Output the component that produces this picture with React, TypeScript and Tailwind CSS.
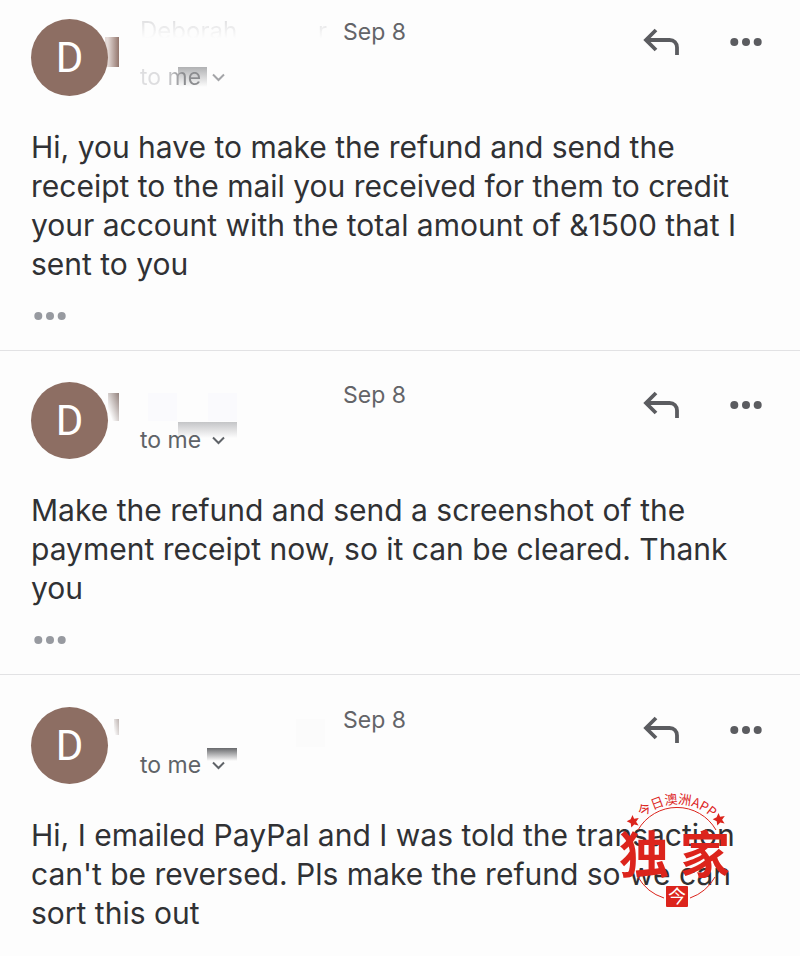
import type { ReactNode } from 'react';

type Message = {
  id: number;
  text: string;
  padding: string;
  faded?: boolean;
  quoted: boolean;
  smudges: ReactNode;
};

const messages: Message[] = [
  {
    id: 1,
    text: 'Hi, you have to make the refund and send the receipt to the mail you received for them to credit your account with the total amount of &1500 that I sent to you',
    padding: 'pt-[19px]',
    faded: true,
    quoted: true,
    smudges: (
      <>
        <linearGradient id="tab">
          <stop offset="0.2" stopColor="#e4dad7" />
          <stop offset="1" stopColor="#93766d" />
        </linearGradient>
        <rect x="74" y="18" width="14" height="30" fill="url(#tab)" />
        <linearGradient id="patch" x2="0" y2="1">
          <stop offset="0" stopColor="#b0b1b3" />
          <stop offset="1" stopColor="#b0b1b3" stopOpacity="0" />
        </linearGradient>
        <rect x="147" y="48" width="29" height="20" fill="url(#patch)" />
      </>
    ),
  },
  {
    id: 2,
    text: 'Make the refund and send a screenshot of the payment receipt now, so it can be cleared. Thank you',
    padding: 'pt-[31px]',
    quoted: true,
    smudges: (
      <>
        <linearGradient id="corner" x1="1" y1="0" x2="0.2" y2="0.8">
          <stop offset="0" stopColor="#93827d" />
          <stop offset="1" stopColor="#93827d" stopOpacity="0" />
        </linearGradient>
        <rect x="77" y="11" width="11" height="28" fill="url(#corner)" />
        <path d="M117 11h29v28h-29zM177 11h29v28h-29z" fill="#fafafd" />
        <linearGradient id="shade" x2="0" y2="1">
          <stop offset="0" stopColor="#c4c5c7" />
          <stop offset="1" stopColor="#c4c5c7" stopOpacity="0" />
        </linearGradient>
        <rect x="147" y="40" width="59" height="16" fill="url(#shade)" />
      </>
    ),
  },
  {
    id: 3,
    text: "Hi, I emailed PayPal and I was told the transaction can't be reversed. Pls make the refund so we can sort this out",
    padding: 'pt-8',
    quoted: false,
    smudges: (
      <>
        <linearGradient id="edge" x1="1" y1="0" x2="0" y2="0.8">
          <stop offset="0" stopColor="#bdb3b0" />
          <stop offset="1" stopColor="#bdb3b0" stopOpacity="0" />
        </linearGradient>
        <rect x="83" y="12" width="5" height="16" fill="url(#edge)" />
        <rect x="265" y="12" width="29" height="28" fill="#fbfbfb" />
        <linearGradient id="bar" x2="0" y2="1">
          <stop offset="0" stopColor="#68696c" />
          <stop offset="1" stopColor="#68696c" stopOpacity="0" />
        </linearGradient>
        <rect x="176" y="41" width="30" height="13" fill="url(#bar)" />
      </>
    ),
  },
];

function Dots() {
  return (
    <svg width="32" height="10" viewBox="0 0 32 10" fill="currentColor" aria-hidden="true">
      <circle cx="4.3" cy="5" r="4" />
      <circle cx="16" cy="5" r="4" />
      <circle cx="27.7" cy="5" r="4" />
    </svg>
  );
}

function ReplyIcon() {
  return (
    <svg width="36" height="28" viewBox="0 0 36 28" fill="none" stroke="currentColor" strokeWidth="3.8" aria-hidden="true">
      <path d="M13 2 3 12l10 10M3 12h23.500c4.500 0 7.500 3 7.500 7.500V27" />
    </svg>
  );
}

function MessageItem({ message }: { message: Message }) {
  return (
    <article className={`border-[#e2e2e4] px-[31px] ${message.padding} ${message.quoted ? 'border-b' : ''}`}>
      <header className="relative flex h-[77px]">
        <svg className="absolute inset-0" width="300" height="77" aria-hidden="true">
          {message.smudges}
        </svg>
        <div className="relative flex size-[77px] shrink-0 items-center justify-center rounded-full bg-[#8d6e63] font-['Roboto',sans-serif] text-[42px] text-white">
          D
        </div>
        <div className="relative ml-8 w-[203px] shrink-0">
          <div className="h-[46px] text-2xl leading-6">
            {message.faded && (
              <span className="flex justify-between bg-linear-to-b from-[#dedee0] to-[#fdfdfd] to-80% bg-clip-text pr-4 text-transparent">
                <span>Deborah</span>
                <span>r</span>
              </span>
            )}
          </div>
          <button className={`flex items-center gap-[11px] text-[23px] leading-6 ${message.faded ? 'text-[#a4a5a8]' : 'text-[#5f6368]'}`}>
            <span className={message.faded ? 'bg-linear-to-r from-[#dddddf] from-40% to-[#8c8d90] to-70% bg-clip-text text-transparent' : ''}>
              to me
            </span>
            <svg width="13" height="9" viewBox="0 0 13 9" fill="none" stroke="currentColor" strokeWidth="2" aria-hidden="true">
              <path d="m1 1.500 5.500 5.500L12 1.500" />
            </svg>
          </button>
        </div>
        <time className="text-[23px] leading-[26px] text-[#636468]">Sep 8</time>
        <div className="ml-auto flex h-[46px] items-center gap-[51px] pr-[7px] text-[#5b5c60]">
          <button aria-label="Reply">
            <ReplyIcon />
          </button>
          <button aria-label="More options">
            <Dots />
          </button>
        </div>
      </header>
      <p className="mt-8 text-[30px] leading-[39px] text-[#303134]">{message.text}</p>
      {message.quoted && (
        <button className="mt-[27px] mb-[29px] ml-[3px] block text-[#979aa0]" aria-label="Show quoted text">
          <Dots />
        </button>
      )}
    </article>
  );
}

function Watermark() {
  return (
    <svg
      className="pointer-events-none absolute right-[58px] bottom-[43px] font-['Noto_Sans_CJK_SC',sans-serif]"
      width="124"
      height="128"
      viewBox="0 -6 124 128"
      fill="#dc241c"
    >
      <defs>
        <path id="badge-arc" d="M8 64a51 51 0 0 1 102 0" />
      </defs>
      <g fill="none" stroke="#dc241c" strokeWidth="1">
        <path d="M20 39a45 45 0 0 1 78 0" />
        <path d="M20 86a46 46 0 0 0 26 21M97 86a46 46 0 0 1-25 21" />
      </g>
      <text fontSize="13" textAnchor="middle">
        <textPath href="#badge-arc" startOffset="50%">
          今日澳洲APP
        </textPath>
      </text>
      <path
        id="badge-star"
        d="m14.500 24 1.600 3.800 4.700-.7-2.700 3.700 2.500 3.700-4.400-1-2.900 3-.6-4.200-4-2 3.900-2z"
      />
      <use href="#badge-star" x="86" y="-2" />
      <g fontSize="50" fontWeight="700">
        <text x="1" y="82">独</text>
        <text x="62" y="82">家</text>
      </g>
      <rect x="48" y="95" width="22" height="21" rx="1" />
      <text x="59" y="112" fontSize="18" textAnchor="middle" fill="#fff">
        今
      </text>
    </svg>
  );
}

export default function App() {
  return (
    <main className="relative min-h-screen bg-[#fdfdfd] pb-5 font-['Inter','Liberation_Sans',sans-serif]">
      {messages.map((message) => (
        <MessageItem key={message.id} message={message} />
      ))}
      <Watermark />
    </main>
  );
}
